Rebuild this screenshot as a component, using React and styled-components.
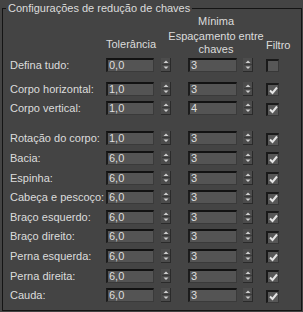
import styled, { createGlobalStyle } from "styled-components";

const GlobalStyle = createGlobalStyle`
  html, body {
    margin: 0;
    padding: 0;
    background: #444444;
  }
  body {
    width: 303px;
    height: 312px;
    overflow: hidden;
    font-family: "Liberation Sans", Arial, sans-serif;
    font-size: 11px;
    color: #dcdcdc;
  }
`;

const Group = styled.fieldset`
  box-sizing: border-box;
  width: 300px;
  height: 311px;
  margin: 0 0 0 2px;
  padding: 0 0 0 7px;
  border: 1px solid #141414;
  min-width: 0;
`;

const Title = styled.legend`
  margin-left: -4px;
  padding: 0 2px;
  line-height: 16px;
  height: 16px;
`;

const Header = styled.div`
  display: flex;
  height: 41px;
  margin-top: -2px;
`;

const HeadCell = styled.div`
  width: ${(p) => p.$w}px;
  padding-top: ${(p) => p.$top || 0}px;
  text-align: ${(p) => p.$align || "left"};
  line-height: 13px;
  white-space: nowrap;
`;

const Sub = styled.div`
  margin-top: ${(p) => p.$mt || 0}px;
`;

const Rows = styled.div`
  display: flex;
  flex-direction: column;
`;

const Row = styled.div`
  display: flex;
  align-items: center;
  height: 19.6px;
  margin-top: ${(p) => p.$gap || 0}px;
`;

const Label = styled.div`
  width: 96px;
  white-space: nowrap;
`;

const Field = styled.div`
  box-sizing: border-box;
  width: ${(p) => p.$w}px;
  height: 14px;
  margin-left: ${(p) => p.$ml || 0}px;
  background: #545454;
  border-top: 2px solid #121212;
  border-left: 2px solid #1c1c1c;
  border-right: 1px solid #3a3a3a;
  border-bottom: 1px solid #3a3a3a;
  padding-left: 1px;
  line-height: 11px;
  color: #dedede;
`;

const Spin = styled.div`
  width: 10px;
  height: 14px;
  margin-left: ${(p) => p.$ml}px;
  display: flex;

  svg {
    display: block;
  }
`;

const Check = styled.div`
  box-sizing: border-box;
  width: 13px;
  height: 13px;
  margin-left: 13px;
  margin-top: 2px;
  background: #575757;
  border-top: 2px solid #1a1a1a;
  border-left: 2px solid #1a1a1a;
  border-right: 1px solid #383838;
  border-bottom: 1px solid #383838;
  display: flex;
  align-items: center;
  justify-content: center;

  svg {
    display: block;
  }
`;

const Spinner = ({ ml }) => (
  <Spin $ml={ml}>
    <svg width="10" height="14" viewBox="0 0 10 14">
      <rect x="0" y="0" width="10" height="14" fill="#2a2a2a" />
      <rect x="0" y="0" width="9" height="13" fill="#4c4c4c" />
      <line x1="1" y1="6.5" x2="9" y2="6.5" stroke="#3a3a3a" />
      <path d="M2.5 5 L5 2.5 L7.5 5 Z" fill="#cfcfcf" />
      <path d="M2.5 8.5 L5 11 L7.5 8.5 Z" fill="#cfcfcf" />
    </svg>
  </Spin>
);

const rows = [
  { label: "Defina tudo:", tol: "0,0", gap: "3", on: false },
  { label: "Corpo horizontal:", tol: "1,0", gap: "3", on: true, space: 4.4 },
  { label: "Corpo vertical:", tol: "1,0", gap: "4", on: true },
  { label: "Rotação do corpo:", tol: "1,0", gap: "3", on: true, space: 10.4 },
  { label: "Bacia:", tol: "6,0", gap: "3", on: true },
  { label: "Espinha:", tol: "6,0", gap: "3", on: true },
  { label: "Cabeça e pescoço:", tol: "6,0", gap: "3", on: true },
  { label: "Braço esquerdo:", tol: "6,0", gap: "3", on: true },
  { label: "Braço direito:", tol: "6,0", gap: "3", on: true },
  { label: "Perna esquerda:", tol: "6,0", gap: "3", on: true },
  { label: "Perna direita:", tol: "6,0", gap: "3", on: true },
  { label: "Cauda:", tol: "6,0", gap: "3", on: true },
];

export default function App() {
  return (
    <>
      <GlobalStyle />
      <Group>
        <Title>Configurações de redução de chaves</Title>
        <Header>
          <HeadCell $w={96} />
          <HeadCell $w={60} $top={24}>Tolerância</HeadCell>
          <HeadCell $w={100} $align="center">
            <Sub $mt={1}>Mínima</Sub>
            <Sub $mt={2}>Espaçamento entre</Sub>
            <Sub>chaves</Sub>
          </HeadCell>
          <HeadCell $w={30} $top={25}>Filtro</HeadCell>
        </Header>
        <Rows>
          {rows.map((r) => (
            <Row key={r.label} $gap={r.space}>
              <Label>{r.label}</Label>
              <Field $w={48}>{r.tol}</Field>
              <Spinner ml={7} />
              <Field $w={49} $ml={17}>{r.gap}</Field>
              <Spinner ml={6} />
              <Check>
                {r.on && (
                  <svg width="9" height="9" viewBox="0 0 9 9">
                    <path d="M1 4.5 L3.5 7 L8 1.5" fill="none" stroke="#e4e4e4" strokeWidth="2" />
                  </svg>
                )}
              </Check>
            </Row>
          ))}
        </Rows>
      </Group>
    </>
  );
}
